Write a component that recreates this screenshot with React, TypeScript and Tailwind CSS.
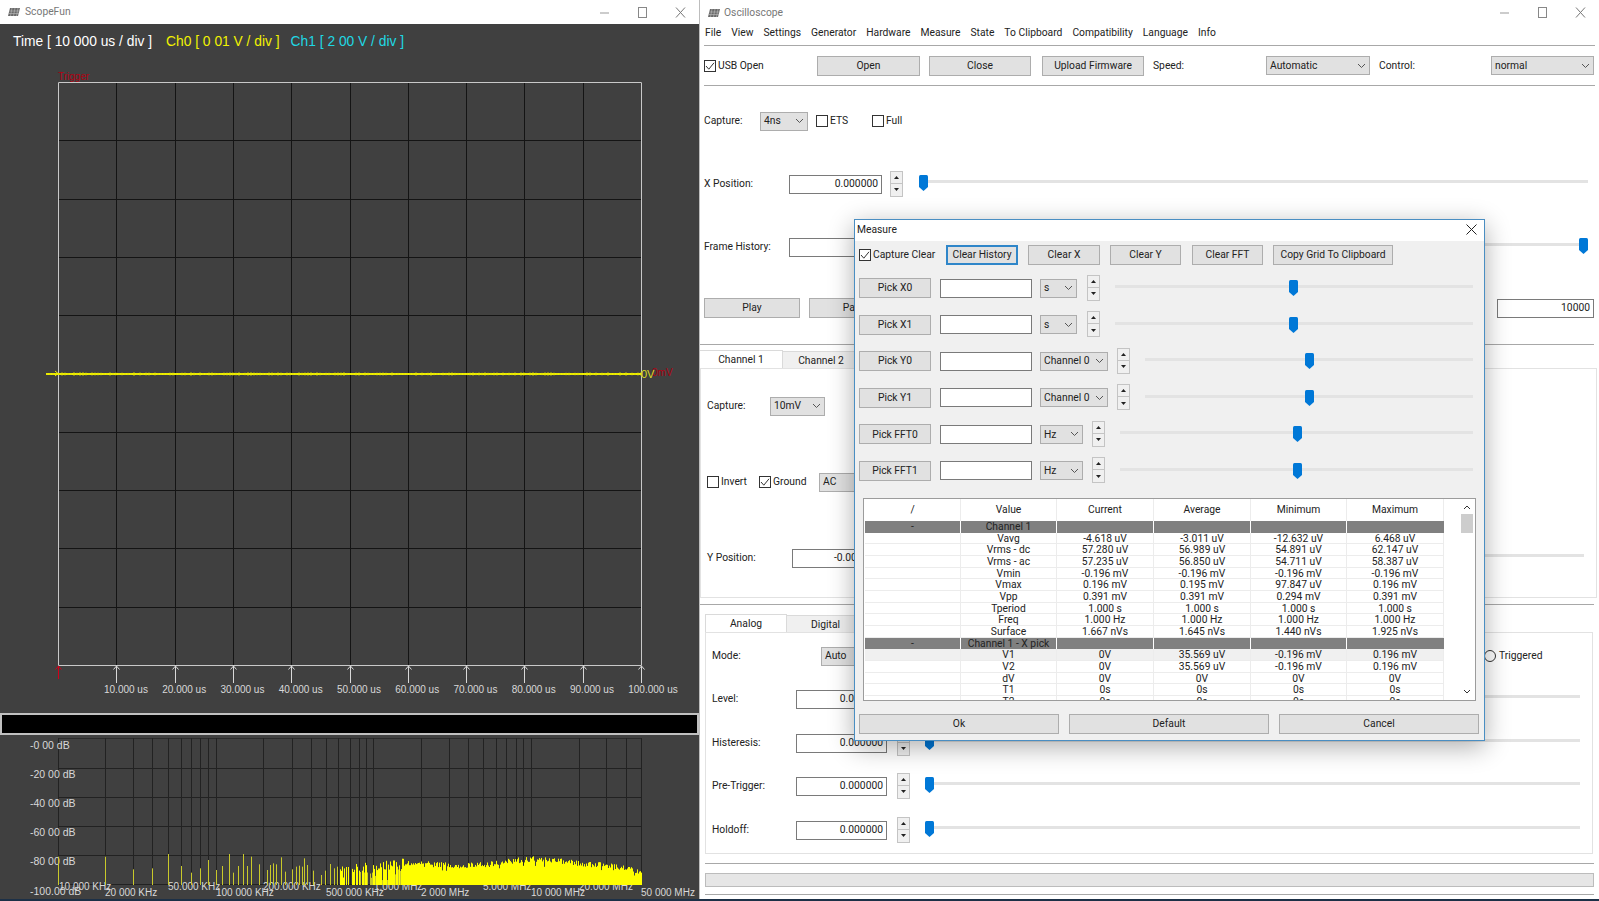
import React from "react";

const UI = "font-['Roboto','Noto_Sans',sans-serif]";

function WinIcon() {
  return (
    <svg width="14" height="10" viewBox="0 0 14 10" className="shrink-0">
      <path d="M3 1h10l-2 8H1z" fill="#6a6a6a" />
      <path d="M5 1 3.5 9M8 1 6.5 9M11 1 9.5 9M2.5 4h10M2 6.500h10" stroke="#bdbdbd" strokeWidth="0.6" />
    </svg>
  );
}

function WinControls({ gap }: { gap: string }) {
  return (
    <div className={`flex items-center ${gap}`}>
      <svg width="11" height="11" viewBox="0 0 11 11"><path d="M1 6h9" stroke="#999" /></svg>
      <svg width="11" height="11" viewBox="0 0 11 11"><rect x="1.500" y="0.500" width="8" height="10" fill="none" stroke="#888" /></svg>
      <svg width="11" height="11" viewBox="0 0 11 11"><path d="M1 0.500l9 10M10 0.500l-9 10" stroke="#777" /></svg>
    </div>
  );
}

function Sep({ className = "" }: { className?: string }) {
  return <div className={`h-px bg-[#a8a8a8] ${className}`} />;
}

function Btn({ className = "", children, focus }: { className?: string; children: React.ReactNode; focus?: boolean }) {
  return (
    <div
      className={`flex h-[20px] shrink-0 items-center justify-center bg-[#e1e1e1] text-[10.300px] text-[#222] ${
        focus ? "border-2 border-[#2f86c9]" : "border border-[#adadad]"
      } ${className}`}
    >
      {children}
    </div>
  );
}

function Combo({ className = "", children }: { className?: string; children: React.ReactNode }) {
  return (
    <div className={`flex h-[19px] shrink-0 items-center justify-between border border-[#adadad] bg-[#e1e1e1] pl-[3px] pr-[3px] text-[10.300px] text-[#222] ${className}`}>
      <span>{children}</span>
      <svg width="9" height="6" viewBox="0 0 9 6" className="shrink-0"><path d="M1 1l3.500 3.500L8 1" fill="none" stroke="#555" /></svg>
    </div>
  );
}

function Input({ className = "", value = "" }: { className?: string; value?: string }) {
  return (
    <div className={`flex h-[19px] shrink-0 items-center justify-end border border-[#7a7a7a] bg-white pr-[3px] text-[10.300px] text-[#222] ${className}`}>
      {value}
    </div>
  );
}

function Spin() {
  return (
    <div className="flex h-[27px] w-[13px] shrink-0 flex-col">
      <div className="flex h-[13px] items-center justify-center border border-[#c4c4c4] bg-[#f0f0f0]">
        <svg width="5" height="3" viewBox="0 0 5 3"><path d="M2.500 0 5 3H0z" fill="#222" /></svg>
      </div>
      <div className="-mt-px flex h-[14px] items-center justify-center border border-[#c4c4c4] bg-[#f0f0f0]">
        <svg width="5" height="3" viewBox="0 0 5 3"><path d="M0 0h5L2.500 3z" fill="#222" /></svg>
      </div>
    </div>
  );
}

function Slider({ className = "mb-[2px]", thumb }: { className?: string; thumb: string }) {
  return (
    <div className={`relative h-[16px] min-w-0 flex-1 ${className}`}>
      <div className="mt-[5px] h-[3px] w-full bg-[#e3e3e3]" />
      <svg width="9" height="16" viewBox="0 0 9 16" className={`absolute top-0 ${thumb}`}>
        <path d="M0 1.500Q0 0 1.500 0h6Q9 0 9 1.500V12l-4.500 4-4.500-4z" fill="#0078d7" />
      </svg>
    </div>
  );
}

function Check({ checked, children, className = "" }: { checked?: boolean; children: React.ReactNode; className?: string }) {
  return (
    <div className={`flex shrink-0 items-center gap-[2px] text-[10.300px] text-[#222] ${className}`}>
      <svg width="12" height="12" viewBox="0 0 12 12" className="shrink-0">
        <rect x="0.500" y="0.500" width="11" height="11" fill="#fff" stroke="#333" />
        {checked && <path d="M2 6l2.800 3.200L10 2.800" fill="none" stroke="#333" />}
      </svg>
      <span>{children}</span>
    </div>
  );
}

function Tab({ active, className = "", children }: { active?: boolean; className?: string; children: React.ReactNode }) {
  return (
    <div
      className={`flex shrink-0 items-center justify-center text-[10.300px] text-[#222] ${
        active ? "h-[19px] border-r border-t border-[#dadada] bg-white" : "mt-[1px] h-[18px] border-r border-t border-[#dadada] bg-[#f0f0f0]"
      } ${className}`}
    >
      {children}
    </div>
  );
}

/* ------------ left window charts ------------- */

function rng(seed: number) {
  let s = seed;
  return () => {
    s = (s * 16807) % 2147483647;
    return (s - 1) / 2147483646;
  };
}

const GX = Array.from({ length: 11 }, (_, i) => Math.round(58 + i * 58.3) + 0.5);
const GY = Array.from({ length: 11 }, (_, i) => Math.round(83 + i * 58.3) + 0.5);
const TIME_LABELS = ["10.000 us", "20.000 us", "30.000 us", "40.000 us", "50.000 us", "60.000 us", "70.000 us", "80.000 us", "90.000 us", "100.000 us"];

function ScopeChart() {
  const r = rng(77);
  let trace = "";
  for (let x = 47; x <= 641; x += 3) {
    const d = 0.6 + r() * 1.4;
    trace += `M${x} ${(375 - d).toFixed(1)}V${(375 + d).toFixed(1)}`;
  }
  return (
    <svg width="699" height="655" viewBox="0 59 699 655" className="block">
      <text x="58" y="81" fontSize="10" fill="#b00012" fontFamily="Liberation Sans">Trigger</text>
      {GY.map((y) => <line key={y} x1="58" x2="641" y1={y} y2={y} stroke="#141414" />)}
      {GX.map((x) => <line key={x} x1={x} x2={x} y1="83" y2="666" stroke="#141414" />)}
      <path d="M58.500 83.500H641.500V666.500H58.500Z" fill="none" stroke="#c9c9c9" />
      {GX.slice(1).map((x) => (
        <g key={x} stroke="#d8d8d8" fill="none">
          <line x1={x} x2={x} y1="667" y2="684" />
          <path d={`M${x - 3} 670.500L${x} 667L${x + 3} 670.500`} />
        </g>
      ))}
      <g stroke="#d0001a" fill="none">
        <line x1="58.500" x2="58.500" y1="667" y2="680" />
        <path d="M55.500 670.500L58.500 667L61.500 670.500" />
      </g>
      {TIME_LABELS.map((t, i) => (
        <text key={t} x={104 + i * 58.25} y="694" fontSize="10" fill="#d8d8d8" fontFamily="Liberation Sans">{t}</text>
      ))}
      <line x1="46" x2="641" y1="375" y2="375" stroke="#f0f000" strokeWidth="2" />
      <path d={trace} fill="none" stroke="#d8d800" strokeWidth="0.800" />
      <path d="M55 372l3 2.500-3 2.500" fill="none" stroke="#f0f000" />
      <text x="652" y="377" fontSize="10" fill="#b00012" fontFamily="Liberation Sans">0mV</text>
      <text x="641" y="379" fontSize="11" fill="#dcdc20" fontFamily="Liberation Sans">0V</text>
    </svg>
  );
}

const FX = [130, 236, 299, 341, 377, 405, 428, 448, 466, 484, 590, 653, 697, 730, 757, 783, 804, 820, 836, 943, 1005, 1049, 1082, 1110, 1134, 1155, 1172, 1189, 1296, 1358, 1402, 1436].map(
  (v) => Math.round(v / 2.24) + 0.5,
);
const DB = [
  ["-0 00 dB", 749],
  ["-20 00 dB", 778],
  ["-40 00 dB", 807],
  ["-60 00 dB", 836],
  ["-80 00 dB", 865],
  ["-100.00 dB", 895],
] as const;
const F_TOP = [
  ["10.000 KHz", 59],
  ["50.000 KHz", 168],
  ["200.000 KHz", 263],
  ["1.000 MHz", 374],
  ["5.000 MHz", 483],
  ["20.000 MHz", 579],
] as const;
const F_BOT = [
  ["20 000 KHz", 105],
  ["100 000 KHz", 216],
  ["500 000 KHz", 326],
  ["2 000 MHz", 421],
  ["10 000 MHz", 531],
  ["50 000 MHz", 641],
] as const;
const PEAKS: [number, number][] = [
  [130, 770], [236, 770], [299, 808], [341, 805], [377, 762], [405, 798], [428, 818], [448, 805], [466, 780], [484, 810], [498, 798],
  [512, 762], [522, 818], [533, 798], [545, 762], [553, 798], [563, 770], [580, 793], [597, 810], [604, 795], [611, 790], [618, 793],
  [629, 772], [638, 815], [655, 808], [662, 800], [670, 797], [677, 800], [682, 775], [688, 795], [702, 812], [720, 825], [728, 812],
  [740, 792], [748, 805], [756, 800],
];
const ENV: [number, number][] = [
  [760, 805], [800, 800], [850, 795], [900, 790], [1000, 795], [1050, 797], [1100, 792], [1190, 776], [1300, 790], [1400, 802], [1436, 820],
];

function envAt(v: number) {
  for (let i = 1; i < ENV.length; i++) {
    if (v <= ENV[i][0]) {
      const [a, b] = ENV[i - 1];
      const [c, d] = ENV[i];
      return b + ((v - a) / (c - a)) * (d - b);
    }
  }
  return 820;
}

function FftChart() {
  const r = rng(4242);
  const base = 885;
  const bars: React.ReactNode[] = [];
  PEAKS.forEach(([v, t], i) => {
    const x = Math.round(v / 2.24) + 0.5;
    bars.push(<line key={`p${i}`} x1={x} x2={x} y1={600 + t / 3} y2={base} stroke="#c9c92a" />);
  });
  for (let px = 339; px <= 641; px++) {
    const v = px * 2.24;
    const sparse = px < 405;
    if (px < 372 && r() < 0.4) continue;
    const deep = sparse && r() < 0.25;
    const top = 600 + (envAt(v) + (r() - 0.5) * (sparse ? 34 : 18) + (deep ? 30 : 0) + (r() < 0.06 ? 12 : 0)) / 3;
    bars.push(<line key={px} x1={px + 0.5} x2={px + 0.5} y1={top.toFixed(1)} y2={base} stroke={deep ? "#c9c92a" : "#ffff00"} />);
  }
  return (
    <svg width="699" height="164" viewBox="0 735 699 164" className="block">
      <line x1="58" x2="641" y1="738.500" y2="738.500" stroke="#2a2a2a" />
      {[768, 797, 826, 855, 884].map((y) => <line key={y} x1="58" x2="641" y1={y + 0.5} y2={y + 0.5} stroke="#222" />)}
      {FX.map((x) => <line key={x} x1={x} x2={x} y1="738" y2="884" stroke="#222" />)}
      <line x1="58.500" x2="58.500" y1="738" y2="884" stroke="#222" />
      {DB.map(([t, y]) => <text key={t} x="30" y={y} fontSize="10.500" fill="#d8d8d8" fontFamily="Liberation Sans">{t}</text>)}
      {F_TOP.map(([t, x]) => <text key={t} x={x} y="890" fontSize="10" fill="#d8d8d8" fontFamily="Liberation Sans">{t}</text>)}
      {bars}
      {F_BOT.map(([t, x]) => <text key={t} x={x} y="896" fontSize="10" fill="#d8d8d8" fontFamily="Liberation Sans">{t}</text>)}
    </svg>
  );
}

function LeftWindow() {
  return (
    <div className="flex w-[700px] shrink-0 flex-col border-r border-[#bdbdbd]">
      <div className={`flex h-[25px] items-center justify-between bg-white pl-[7px] pr-[13px] ${UI}`}>
        <div className="flex items-center gap-[4px] text-[10.300px] text-[#777]">
          <WinIcon />
          <span>ScopeFun</span>
        </div>
        <WinControls gap="gap-[27px]" />
      </div>
      <div className="flex flex-1 flex-col bg-[#404040] font-['Liberation_Sans',sans-serif]">
        <div className="flex h-[34px] items-center pl-[13px] pt-[2px] text-[13.800px]">
          <span className="text-white">Time [ 10 000 us / div ]</span>
          <span className="ml-[14px] text-[#f2f200]">Ch0 [ 0 01 V / div ]</span>
          <span className="ml-[11px] text-[#1fd8e4]">Ch1 [ 2 00 V / div ]</span>
        </div>
        <ScopeChart />
        <div className="h-[22px] border-2 border-[#c0c0c0] bg-black" />
        <FftChart />
      </div>
    </div>
  );
}

/* ------------ right window ------------- */

const MENU = ["File", "View", "Settings", "Generator", "Hardware", "Measure", "State", "To Clipboard", "Compatibility", "Language", "Info"];

function ParamRow({ label, value, thumb = "left-0", className = "" }: { label: string; value: string; thumb?: string; className?: string }) {
  return (
    <div className={`flex h-[26px] items-center pl-[6px] pr-[12px] ${className}`}>
      <span className="w-[84px] shrink-0">{label}</span>
      <Input className="w-[91px]" value={value} />
      <div className="ml-[10px] shrink-0"><Spin /></div>
      <div className="ml-[15px] flex min-w-0 flex-1"><Slider thumb={thumb} /></div>
    </div>
  );
}

function RightWindow() {
  return (
    <div className={`flex min-w-0 flex-1 flex-col bg-white text-[10.300px] text-[#222] ${UI}`}>
      <div className="flex h-[25px] shrink-0 items-center justify-between pl-[7px] pr-[13px]">
        <div className="flex items-center gap-[3px] text-[10.300px] text-[#777]">
          <WinIcon />
          <span>Oscilloscope</span>
        </div>
        <WinControls gap="gap-[27px]" />
      </div>
      <div className="flex h-[20px] shrink-0 items-center gap-[10px] pb-[4px] pl-[5px]">
        {MENU.map((m) => <span key={m}>{m}</span>)}
      </div>
      <Sep className="mx-[4px]" />
      <div className="flex h-[39px] shrink-0 items-center pl-[4px]">
        <Check checked className="w-[113px]">USB Open</Check>
        <Btn className="w-[103px]">Open</Btn>
        <Btn className="ml-[9px] w-[102px]">Close</Btn>
        <Btn className="ml-[11px] w-[102px]">Upload Firmware</Btn>
        <span className="ml-[9px] w-[113px] shrink-0">Speed:</span>
        <Combo className="w-[104px]">Automatic</Combo>
        <span className="ml-[9px] w-[112px] shrink-0">Control:</span>
        <Combo className="w-[103px]">normal</Combo>
      </div>
      <Sep className="mx-[4px]" />
      <div className="mt-[25px] flex h-[20px] shrink-0 items-center pl-[4px]">
        <span className="w-[56px] shrink-0">Capture:</span>
        <Combo className="w-[48px]">4ns</Combo>
        <Check className="ml-[8px] w-[56px]">ETS</Check>
        <Check>Full</Check>
      </div>
      <div className="mt-[40px] flex h-[26px] shrink-0 items-center pl-[4px] pr-[11px]">
        <span className="w-[85px] shrink-0">X Position:</span>
        <Input className="w-[93px]" value="0.000000" />
        <div className="ml-[8px] shrink-0"><Spin /></div>
        <div className="ml-[16px] flex min-w-0 flex-1"><Slider thumb="left-0" /></div>
      </div>
      <div className="mt-[37px] flex h-[26px] shrink-0 items-center pl-[4px] pr-[11px]">
        <span className="w-[85px] shrink-0">Frame History:</span>
        <Input className="w-[93px]" />
        <div className="ml-[8px] shrink-0"><Spin /></div>
        <div className="ml-[16px] flex min-w-0 flex-1"><Slider thumb="right-0" /></div>
      </div>
      <div className="mt-[38px] flex h-[20px] shrink-0 items-center justify-between pl-[4px] pr-[5px]">
        <div className="flex">
          <Btn className="w-[96px]">Play</Btn>
          <Btn className="ml-[9px] w-[96px]">Pause</Btn>
        </div>
        <Input className="w-[97px]" value="10000" />
      </div>
      <Sep className="ml-[0px] mr-[5px] mt-[26px]" />
      <div className="mt-[5px] flex h-[19px] shrink-0">
        <Tab active className="w-[83px]">Channel 1</Tab>
        <Tab className="w-[77px]">Channel 2</Tab>
      </div>
      <div className="-mt-px mr-[2px] h-[230px] shrink-0 border border-[#e2e2e2] pl-[6px] pr-[12px]">
        <div className="mt-[27px] flex h-[20px] items-center">
          <span className="w-[63px] shrink-0">Capture:</span>
          <Combo className="w-[55px]">10mV</Combo>
        </div>
        <div className="mt-[56px] flex h-[20px] items-center">
          <Check className="w-[52px]">Invert</Check>
          <Check checked className="w-[60px]">Ground</Check>
          <Combo className="w-[50px]">AC</Combo>
        </div>
        <div className="mt-[53px] flex h-[26px] items-center">
          <span className="w-[85px] shrink-0">Y Position:</span>
          <Input className="w-[92px]" value="-0.000000" />
          <div className="ml-[6px] shrink-0"><Spin /></div>
          <div className="ml-[15px] flex min-w-0 flex-1"><Slider thumb="left-[300px]" /></div>
        </div>
      </div>
      <Sep className="mr-[5px] mt-[6px]" />
      <div className="mt-[9px] flex h-[19px] shrink-0 pl-[5px]">
        <Tab active className="w-[82px] border-l">Analog</Tab>
        <Tab className="w-[78px]">Digital</Tab>
      </div>
      <div className="-mt-px ml-[5px] mr-[6px] h-[222px] shrink-0 border border-[#e2e2e2] pt-[13px]">
        <div className="flex h-[20px] items-center justify-between pl-[6px]">
          <div className="flex items-center">
            <span className="w-[109px] shrink-0">Mode:</span>
            <Combo className="w-[60px]">Auto</Combo>
          </div>
          <div className="flex w-[108px] items-center gap-[3px]">
            <span className="h-[12px] w-[12px] rounded-full border border-[#333] bg-white" />
            <span>Triggered</span>
          </div>
        </div>
        <ParamRow label="Level:" value="0.000000" thumb="left-0" className="mt-[20px]" />
        <ParamRow label="Histeresis:" value="0.000000" thumb="left-0" className="mt-[18px]" />
        <ParamRow label="Pre-Trigger:" value="0.000000" thumb="left-0" className="mt-[17px]" />
        <ParamRow label="Holdoff:" value="0.000000" thumb="left-0" className="mt-[18px]" />
      </div>
      <Sep className="mx-[5px] mt-[9px]" />
      <div className="ml-[5px] mr-[5px] mt-[9px] h-[14px] shrink-0 border border-[#bcbcbc] bg-[#e6e6e6]" />
      <Sep className="mx-[5px] mt-[7px]" />
    </div>
  );
}

/* ------------ dialog ------------- */

const COLS = "grid grid-cols-[96px_96px_97px_97px_96px_97px]";
const ROWS: (string[] | string)[] = [
  "Channel 1",
  ["Vavg", "-4.618 uV", "-3.011 uV", "-12.632 uV", "6.468 uV"],
  ["Vrms - dc", "57.280 uV", "56.989 uV", "54.891 uV", "62.147 uV"],
  ["Vrms - ac", "57.235 uV", "56.850 uV", "54.711 uV", "58.387 uV"],
  ["Vmin", "-0.196 mV", "-0.196 mV", "-0.196 mV", "-0.196 mV"],
  ["Vmax", "0.196 mV", "0.195 mV", "97.847 uV", "0.196 mV"],
  ["Vpp", "0.391 mV", "0.391 mV", "0.294 mV", "0.391 mV"],
  ["Tperiod", "1.000 s", "1.000 s", "1.000 s", "1.000 s"],
  ["Freq", "1.000 Hz", "1.000 Hz", "1.000 Hz", "1.000 Hz"],
  ["Surface", "1.667 nVs", "1.645 nVs", "1.440 nVs", "1.925 nVs"],
  "Channel 1 - X pick",
  ["V1", "0V", "35.569 uV", "-0.196 mV", "0.196 mV"],
  ["V2", "0V", "35.569 uV", "-0.196 mV", "0.196 mV"],
  ["dV", "0V", "0V", "0V", "0V"],
  ["T1", "0s", "0s", "0s", "0s"],
  ["T2", "0s", "0s", "0s", "0s"],
];

function PickRow({ label, unit, comboW, spinGap, thumb }: { label: string; unit: string; comboW: string; spinGap: string; thumb: string }) {
  return (
    <div className="flex h-[20px] items-center pl-[4px] pr-[11px]">
      <Btn className="w-[72px]">{label}</Btn>
      <Input className="ml-[9px] w-[92px]" />
      <Combo className={`ml-[8px] ${comboW}`}>{unit}</Combo>
      <div className={`shrink-0 ${spinGap}`}><Spin /></div>
      <div className="ml-[15px] flex min-w-0 flex-1"><Slider className="mb-0" thumb={thumb} /></div>
    </div>
  );
}

function Dialog() {
  return (
    <div className={`absolute left-[854px] top-[219px] flex h-[522px] w-[631px] flex-col border border-[#4a8ec2] bg-[#f0f0f0] text-[10.300px] text-[#222] shadow-[0_6px_24px_rgba(0,0,0,0.32)] ${UI}`}>
      <div className="flex h-[21px] shrink-0 items-center justify-between bg-white pb-[2px] pl-[2px] pr-[7px]">
        <span>Measure</span>
        <svg width="11" height="11" viewBox="0 0 11 11"><path d="M0.500 0.500l10 10M10.500 0.500l-10 10" stroke="#222" /></svg>
      </div>
      <div className="mt-[4px] flex h-[20px] shrink-0 items-center pl-[4px]">
        <Check checked className="w-[87px]">Capture Clear</Check>
        <Btn focus className="w-[72px]">Clear History</Btn>
        <Btn className="ml-[10px] w-[72px]">Clear X</Btn>
        <Btn className="ml-[10px] w-[71px]">Clear Y</Btn>
        <Btn className="ml-[11px] w-[71px]">Clear FFT</Btn>
        <Btn className="ml-[10px] w-[120px]">Copy Grid To Clipboard</Btn>
      </div>
      <div className="mt-[13px] flex shrink-0 flex-col gap-[16.600px]">
        <PickRow label="Pick X0" unit="s" comboW="w-[37px]" spinGap="ml-[10px]" thumb="left-[174px]" />
        <PickRow label="Pick X1" unit="s" comboW="w-[37px]" spinGap="ml-[10px]" thumb="left-[174px]" />
        <PickRow label="Pick Y0" unit="Channel 0" comboW="w-[68px]" spinGap="ml-[9px]" thumb="left-[160px]" />
        <PickRow label="Pick Y1" unit="Channel 0" comboW="w-[68px]" spinGap="ml-[9px]" thumb="left-[160px]" />
        <PickRow label="Pick FFT0" unit="Hz" comboW="w-[43px]" spinGap="ml-[9px]" thumb="left-[173px]" />
        <PickRow label="Pick FFT1" unit="Hz" comboW="w-[43px]" spinGap="ml-[9px]" thumb="left-[173px]" />
      </div>
      <div className="ml-[8px] mt-[17px] flex h-[203px] w-[613px] shrink-0 overflow-hidden border border-[#9c9c9c] bg-white pl-px">
        <div className="w-[579px] shrink-0">
          <div className={`${COLS} h-[22px] items-center text-center`}>
            {["/", "Value", "Current", "Average", "Minimum", "Maximum"].map((h) => (
              <div key={h} className="flex h-full items-center justify-center border-r border-[#ececec]">{h}</div>
            ))}
          </div>
          {ROWS.map((row, i) =>
            typeof row === "string" ? (
              <div key={i} className={`${COLS} h-[11.660px] text-center leading-[11.660px]`}>
                <div className="mr-px bg-[#808080]">-</div>
                <div className="mr-px whitespace-nowrap bg-[#808080]">{row}</div>
                <div className="mr-px bg-[#808080]" />
                <div className="mr-px bg-[#808080]" />
                <div className="mr-px bg-[#808080]" />
                <div className="bg-[#808080]" />
              </div>
            ) : (
              <div key={i} className={`${COLS} h-[11.660px] border-b border-[#ececec] text-center leading-[11px] ${row[0] === "V1" ? "bg-[#f0f0f0]" : ""}`}>
                <div className="border-r border-[#ececec]" />
                {row.map((c, j) => <div key={j} className="whitespace-nowrap border-r border-[#ececec]">{c}</div>)}
              </div>
            ),
          )}
        </div>
        <div className="ml-[17px] flex w-[12px] shrink-0 flex-col items-center pt-[6px]">
          <svg width="8" height="5" viewBox="0 0 8 5"><path d="M1 4l3-3 3 3" fill="none" stroke="#333" /></svg>
          <div className="mt-[4px] h-[19px] w-full bg-[#cdcdcd]" />
          <div className="flex-1" />
          <svg width="8" height="5" viewBox="0 0 8 5" className="mb-[6px]"><path d="M1 1l3 3 3-3" fill="none" stroke="#333" /></svg>
        </div>
      </div>
      <div className="mt-[13px] flex shrink-0 gap-[10px] pl-[4px]">
        <Btn className="w-[200px]">Ok</Btn>
        <Btn className="w-[200px]">Default</Btn>
        <Btn className="w-[200px]">Cancel</Btn>
      </div>
    </div>
  );
}

export default function App() {
  return (
    <div className="relative flex h-[901px] w-[1599px] flex-col overflow-hidden bg-white">
      <div className="flex h-[899px] shrink-0">
        <LeftWindow />
        <RightWindow />
      </div>
      <div className="h-[2px] shrink-0 bg-[#1c3047]" />
      <Dialog />
    </div>
  );
}
